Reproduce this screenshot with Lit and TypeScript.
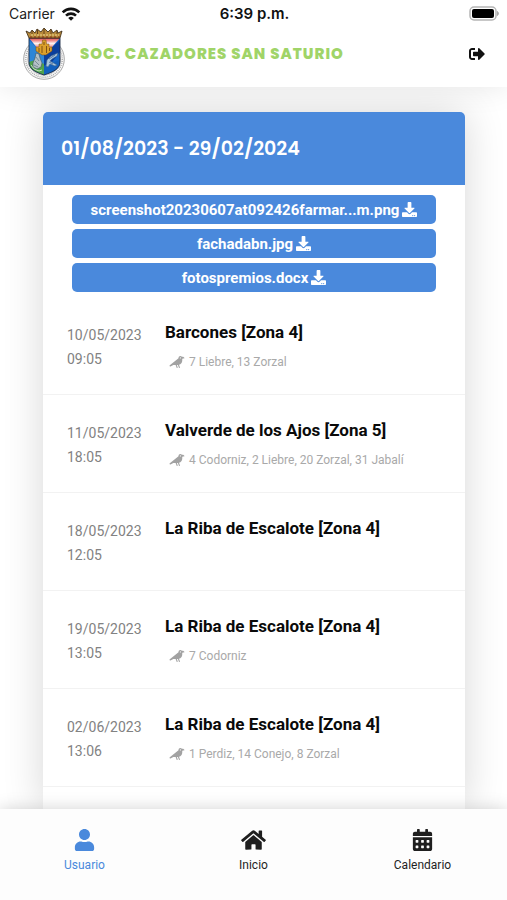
import { LitElement, html, css, svg, nothing } from "lit";
import { customElement, property } from "lit/decorators.js";

type Glyph = { box: string; d: string };

const GLYPHS: Record<string, Glyph> = {
  logout: {
    box: "0 0 512 512",
    d: "M497 273L329 441c-15 15-41 4.5-41-17v-96H152c-13.3 0-24-10.7-24-24v-96c0-13.3 10.7-24 24-24h136V88c0-21.4 25.9-32 41-17l168 168c9.3 9.4 9.3 24.6 0 34zM192 436v-40c0-6.6-5.4-12-12-12H96c-17.7 0-32-14.3-32-32V160c0-17.7 14.3-32 32-32h84c6.6 0 12-5.4 12-12V76c0-6.6-5.4-12-12-12H96c-53 0-96 43-96 96v192c0 53 43 96 96 96h84c6.6 0 12-5.4 12-12z",
  },
  download: {
    box: "0 0 512 512",
    d: "M216 0h80c13.3 0 24 10.7 24 24v168h87.7c17.8 0 26.7 21.5 14.1 34.1L269.7 378.3c-7.5 7.5-19.8 7.5-27.3 0L90.1 226.1c-12.6-12.6-3.7-34.1 14.1-34.1H192V24c0-13.3 10.7-24 24-24zm296 376v112c0 13.3-10.7 24-24 24H24c-13.3 0-24-10.7-24-24V376c0-13.3 10.7-24 24-24h146.7l49 49c20.1 20.1 52.5 20.1 72.6 0l49-49H488c13.3 0 24 10.7 24 24zm-124 88c0-11-9-20-20-20s-20 9-20 20 9 20 20 20 20-9 20-20zm64 0c0-11-9-20-20-20s-20 9-20 20 9 20 20 20 20-9 20-20z",
  },
  crow: {
    box: "0 0 640 512",
    d: "M544 32h-16.36C513.04 12.68 490.09 0 464 0c-44.18 0-80 35.82-80 80v20.98L12.09 393.57A30.216 30.216 0 0 0 0 417.74c0 22.46 23.64 37.07 43.73 27.03L165.27 384h96.49l44.41 120.1c2.27 6.23 9.15 9.44 15.38 7.17l22.55-8.21c6.23-2.27 9.44-9.15 7.17-15.38L312.94 384H352c1.91 0 3.76-.23 5.66-.29l44.51 120.38c2.27 6.23 9.15 9.44 15.38 7.17l22.55-8.21c6.23-2.27 9.44-9.15 7.17-15.38l-41.24-111.5C485.74 352.8 544 279.26 544 192v-80l96-16c0-35.35-42.98-64-96-64zm-80 72c-13.25 0-24-10.75-24-24 0-13.26 10.75-24 24-24s24 10.74 24 24c0 13.25-10.75 24-24 24z",
  },
  user: {
    box: "0 0 448 512",
    d: "M224 256c70.7 0 128-57.3 128-128S294.7 0 224 0 96 57.3 96 128s57.3 128 128 128zm89.6 32h-16.7c-22.2 10.2-46.9 16-72.9 16s-50.6-5.8-72.9-16h-16.7C60.2 288 0 348.2 0 422.4V464c0 26.5 21.5 48 48 48h352c26.5 0 48-21.5 48-48v-41.6c0-74.2-60.2-134.4-134.4-134.4z",
  },
  home: {
    box: "0 0 576 512",
    d: "M280.37 148.26L96 300.11V464a16 16 0 0 0 16 16l112.06-.29a16 16 0 0 0 15.92-16V368a16 16 0 0 1 16-16h64a16 16 0 0 1 16 16v95.64a16 16 0 0 0 16 16.05L464 480a16 16 0 0 0 16-16V300L295.67 148.26a12.19 12.19 0 0 0-15.3 0zM571.6 251.47L488 182.56V44.05a12 12 0 0 0-12-12h-56a12 12 0 0 0-12 12v72.61L318.47 43a48 48 0 0 0-61 0L4.34 251.47a12 12 0 0 0-1.6 16.9l25.5 31A12 12 0 0 0 45.15 301l235.22-193.74a12.19 12.19 0 0 1 15.3 0L530.9 301a12 12 0 0 0 16.9-1.6l25.5-31a12 12 0 0 0-1.7-16.93z",
  },
  calendar: {
    box: "0 0 448 512",
    d:
      "M0 464c0 26.5 21.5 48 48 48h352c26.5 0 48-21.5 48-48V192H0v272z" +
      [320, 192, 64]
        .flatMap((x) => [268, 396].map((y) => `M${x} ${y}v40c0 6.6 5.4 12 12 12h40c6.6 0 12-5.4 12-12v-40c0-6.6-5.4-12-12-12h-40c-6.6 0-12 5.4-12 12z`))
        .join("") +
      "M400 64h-48V16c0-8.8-7.2-16-16-16h-32c-8.8 0-16 7.2-16 16v48H160V16c0-8.8-7.2-16-16-16h-32c-8.8 0-16 7.2-16 16v48H48C21.5 64 0 85.5 0 112v48h448v-48c0-26.5-21.5-48-48-48z",
  },
};

@customElement("app-glyph")
class AppGlyph extends LitElement {
  static styles = css`
    :host { display: inline-flex; }
    svg { height: 100%; width: 100%; fill: currentColor; fill-rule: evenodd; }
  `;
  @property() name = "user";
  render() {
    const g = GLYPHS[this.name];
    return html`<svg viewBox=${g.box} aria-hidden="true">${svg`<path d=${g.d}></path>`}</svg>`;
  }
}

@customElement("club-crest")
class ClubCrest extends LitElement {
  static styles = css`
    :host { display: flex; }
    svg { width: 100%; height: 100%; }
  `;
  render() {
    return html`<svg viewBox="0 0 44 52" role="img" aria-label="Escudo">
      <defs>
        <clipPath id="shield"><path d="M7 10H38V34C38 41 31 44 22 47C13 44 7 41 7 34Z"></path></clipPath>
        <linearGradient id="top" x1="0" y1="0" x2="0" y2="1">
          <stop offset="0" stop-color="#e0484c"></stop>
          <stop offset=".15" stop-color="#ee8c8c"></stop>
          <stop offset=".32" stop-color="#fdf4f2"></stop>
          <stop offset=".5" stop-color="#f0a09c"></stop>
          <stop offset="1" stop-color="#d8484b"></stop>
        </linearGradient>
      </defs>
      <circle cx="22" cy="31" r="20.300" fill="#f8f8f8" stroke="#a9a9a9" stroke-width="1"></circle>
      <circle cx="22" cy="31" r="18.200" fill="none" stroke="#a5a5a5" stroke-width="1.500" stroke-dasharray=".9 1.100"></circle>
      <circle cx="22" cy="31" r="16.400" fill="#e4e4e4" stroke="#9c9c9c" stroke-width=".5"></circle>
      <g clip-path="url(#shield)">
        <path fill="#1767c8" d="M7 10H38V48H7Z"></path>
        <path fill="#2d86d8" d="M7 12L22 27V36H7Z"></path>
        <path fill="#4fa24c" d="M7 34L13 32L22 36V48H7Z"></path>
        <path fill="#0b3f9c" d="M22 27L38 12V24L30 34L22 38Z"></path>
        <path fill="#1260bd" d="M22 38L38 32V48H22Z"></path>
        <path fill="url(#top)" d="M7 10H38L23 27H21Z"></path>
        <path fill="#dba02c" stroke="#754813" stroke-width=".5" d="M14 23V19H17V16H20L20.500 12H24L24.500 16H27V19H30V23L24 27H20Z"></path>
        <path stroke="#754813" stroke-width=".9" d="M17 20V24M20 18V25M24.500 18V25M27.500 20V23M22 14V17"></path>
        <path fill="#b4c0c6" stroke="#3f5663" stroke-width=".6" d="M14 25L17 26L18 30L20 35L19 39L15 41L11 39L11 35L13 30Z"></path>
        <path fill="none" stroke="#4f6874" stroke-width=".6" d="M14 29L17 33M13 33L17 37M12 37L16 39"></path>
        <path fill="#a9c6de" stroke="#43688c" stroke-width=".6" d="M24 38L25 32L29 28L36 25L35 28L30 31L28 33L35 37L33 38L28 36L26 39Z"></path>
        <path fill="none" stroke="#0c2f66" stroke-width=".5" d="M27 31L33 27M27 34L31 36"></path>
        <path fill="none" stroke="#dfeeda" stroke-width=".8" d="M9 37L12 41L17 43L20 42"></path>
      </g>
      <path fill="none" stroke="#1d2c48" stroke-width=".9" d="M7 10H38V34C38 41 31 44 22 47C13 44 7 41 7 34Z"></path>
      <path fill="#b98b3b" stroke="#33230f" stroke-width=".8" d="M7 10L4 3L8 5L10 2L13 5L15 1L19 4L22 0L26 4L29 1L31 5L35 2L36 5L40 3L38 10Z"></path>
      <path fill="none" stroke="#eed58d" stroke-width="1.100" stroke-dasharray="2 1" d="M9 7H37"></path>
      <path fill="none" stroke="#4b2f14" stroke-width=".8" d="M10 3V6M15.500 2V6M22 1V6M29 2V6M35 3V6"></path>
      <path fill="none" stroke="#7b2416" stroke-width=".9" stroke-dasharray="2 2" d="M8 9H38"></path>
    </svg>`;
  }
}

interface Entry {
  date: string;
  time: string;
  place: string;
  bag?: string;
}

const FILES = ["screenshot20230607at092426farmar...m.png", "fachadabn.jpg", "fotospremios.docx"];

const ENTRIES: Entry[] = [
  { date: "10/05/2023", time: "09:05", place: "Barcones [Zona 4]", bag: "7 Liebre, 13 Zorzal" },
  { date: "11/05/2023", time: "18:05", place: "Valverde de los Ajos [Zona 5]", bag: "4 Codorniz, 2 Liebre, 20 Zorzal, 31 Jabalí" },
  { date: "18/05/2023", time: "12:05", place: "La Riba de Escalote [Zona 4]" },
  { date: "19/05/2023", time: "13:05", place: "La Riba de Escalote [Zona 4]", bag: "7 Codorniz" },
  { date: "02/06/2023", time: "13:06", place: "La Riba de Escalote [Zona 4]", bag: "1 Perdiz, 14 Conejo, 8 Zorzal" },
];

const TABS = [
  { icon: "user", label: "Usuario", active: true },
  { icon: "home", label: "Inicio", active: false },
  { icon: "calendar", label: "Calendario", active: false },
];

@customElement("app-root")
class AppRoot extends LitElement {
  static styles = css`
    :host {
      display: flex;
      flex-direction: column;
      height: 100vh;
      overflow: hidden;
      background: #fff;
      color: #1f1f1f;
      font-family: Roboto, sans-serif;
    }
    h1, h2, h3, p, ul { margin: 0; padding: 0; }
    ul { list-style: none; }
    .status {
      display: grid;
      grid-template-columns: 1fr auto 1fr;
      align-items: center;
      height: 27px;
      padding: 0 7px 0 9px;
      font: 400 14px/27px Inter, sans-serif;
      color: #222;
      background: #fff;
      position: relative;
      z-index: 3;
    }
    .carrier { display: flex; align-items: center; gap: 6px; }
    .wifi { width: 20px; height: 14px; }
    .clock { font-size: 15px; font-weight: 600; color: #111; }
    .battery { width: 31px; height: 15px; justify-self: end; }
    .bar {
      display: flex;
      align-items: center;
      height: 60px;
      padding: 0 22px;
      position: relative;
      z-index: 2;
      background: #fff;
      box-shadow: 0 0 30px rgba(0, 0, 0, 0.1);
    }
    .crest { width: 44px; height: 52px; margin-bottom: 6px; }
    .brand {
      flex: 1;
      margin: 0 0 6px 14px;
      font: 800 15px/24px Poppins, Inter, sans-serif;
      letter-spacing: 1px;
      color: #a0d468;
    }
    .logout {
      display: flex;
      margin-bottom: 6px;
      padding: 0;
      border: 0;
      background: none;
      color: #111;
    }
    .logout app-glyph { width: 16px; height: 16px; }
    main {
      flex: 1;
      min-height: 0;
      display: flex;
      flex-direction: column;
      overflow: hidden;
      padding: 25px 42px 0 43px;
    }
    .card {
      flex: 1 0 auto;
      border-radius: 5px 5px 0 0;
      background: #fff;
      box-shadow: 0 0 40px rgba(0, 0, 0, 0.16);
    }
    .season {
      padding: 21px 18px 20px;
      border-radius: 5px 5px 0 0;
      background: #4a89dc;
      color: #fff;
      font: 600 19px/32px Poppins, Inter, sans-serif;
    }
    .files { display: grid; gap: 5px; padding: 10px 29px 5px; }
    .file {
      display: flex;
      align-items: center;
      justify-content: center;
      gap: 3px;
      width: 100%;
      height: 29px;
      padding: 0;
      border: 0;
      border-radius: 5px;
      background: #4a89dc;
      color: #fff;
      font: 700 15px/20px Roboto, sans-serif;
    }
    .file app-glyph { width: 15px; height: 15px; }
    .entry {
      display: grid;
      grid-template-columns: 98px 1fr;
      height: 97px;
      padding: 0 24px;
      border-bottom: 1px solid #f2f2f2;
    }
    .when { padding-top: 26px; font-size: 14px; line-height: 24px; color: #828282; }
    .what { padding-top: 23px; }
    .place { font-size: 17px; line-height: 24px; font-weight: 700; color: #0a0a0a; }
    .bag {
      display: flex;
      align-items: center;
      gap: 4px;
      padding: 8px 0 0 4px;
      font-size: 12px;
      line-height: 20px;
      color: #a9a9a9;
    }
    .bag app-glyph { width: 16px; height: 12px; color: #a2a2a2; }
    nav {
      display: grid;
      grid-template-columns: repeat(3, 1fr);
      height: 91px;
      position: relative;
      z-index: 2;
      background: #fdfdfd;
      box-shadow: 0 0 16px rgba(0, 0, 0, 0.18);
    }
    .tab {
      display: flex;
      flex-direction: column;
      align-items: center;
      gap: 2px;
      padding-top: 20px;
      color: #1f1f1f;
      font-size: 12px;
      line-height: 24px;
      text-decoration: none;
    }
    .tab app-glyph { width: 25px; height: 22px; }
    .active { color: #4a89dc; }
  `;

  render() {
    return html`
      <div class="status">
        <span class="carrier">Carrier
          <svg class="wifi" viewBox="0 0 20 14" fill="none" stroke="#111" stroke-width="2.6" aria-hidden="true">
            <path d="M1.700 5.300A11.700 11.700 0 0 1 18.300 5.300"></path>
            <path d="M5 8.600A7.200 7.200 0 0 1 15 8.600"></path>
            <path d="M10 13.800L7.200 11A4 4 0 0 1 12.800 11Z" fill="#111" stroke="none"></path>
          </svg>
        </span>
        <span class="clock">6:39 p.m.</span>
        <svg class="battery" viewBox="0 0 31 15" aria-hidden="true">
          <rect x="1" y="1" width="26" height="13" rx="4" fill="#fff" stroke="#b5b5b5" stroke-width="1.500"></rect>
          <rect x="3" y="3" width="22" height="9" rx="2" fill="#000"></rect>
          <path d="M28.500 5.500Q30.500 7.500 28.500 9.500Z" fill="#aaa" stroke="#aaa"></path>
        </svg>
      </div>
      <header class="bar">
        <club-crest class="crest"></club-crest>
        <h1 class="brand">SOC. CAZADORES SAN SATURIO</h1>
        <button class="logout" aria-label="Salir"><app-glyph name="logout"></app-glyph></button>
      </header>
      <main>
        <section class="card">
          <h2 class="season">01/08/2023 - 29/02/2024</h2>
          <div class="files">
            ${FILES.map((f) => html`<button class="file">${f}<app-glyph name="download"></app-glyph></button>`)}
          </div>
          <ul>
            ${ENTRIES.map(
              (e) => html`<li class="entry">
                <div class="when"><p>${e.date}</p><p>${e.time}</p></div>
                <div class="what">
                  <h3 class="place">${e.place}</h3>
                  ${e.bag ? html`<p class="bag"><app-glyph name="crow"></app-glyph>${e.bag}</p>` : nothing}
                </div>
              </li>`
            )}
          </ul>
        </section>
      </main>
      <nav>
        ${TABS.map(
          (t) => html`<a class="tab ${t.active ? "active" : ""}" href="#"><app-glyph name=${t.icon}></app-glyph>${t.label}</a>`
        )}
      </nav>
    `;
  }
}
